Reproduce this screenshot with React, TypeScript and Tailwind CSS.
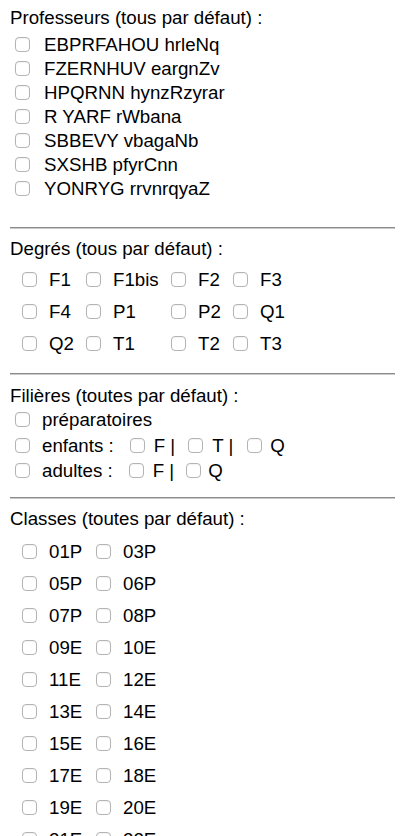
import React from 'react'

const professeurs = [
  'EBPRFAHOU hrleNq',
  'FZERNHUV eargnZv',
  'HPQRNN hynzRzyrar',
  'R YARF rWbana',
  'SBBEVY vbagaNb',
  'SXSHB pfyrCnn',
  'YONRYG rrvnrqyaZ'
]

const degres = [
  ['F1', 'F1bis', 'F2', 'F3'],
  ['F4', 'P1', 'P2', 'Q1'],
  ['Q2', 'T1', 'T2', 'T3']
]

const classes = [
  ['01P', '03P'],
  ['05P', '06P'],
  ['07P', '08P'],
  ['09E', '10E'],
  ['11E', '12E'],
  ['13E', '14E'],
  ['15E', '16E'],
  ['17E', '18E'],
  ['19E', '20E'],
  ['21E', '22E']
]

function Box() {
  return (
    <input
      type="checkbox"
      className="appearance-none block w-[15px] h-[15px] shrink-0 m-0 rounded-[4px] border border-[#b4b4b4] bg-white shadow-[inset_0_1px_1px_rgba(0,0,0,0.05)]"
    />
  )
}

function Separator() {
  return (
    <div>
      <div className="h-px bg-[#8c8c8c]" />
      <div className="h-px bg-[#c9c9c9]" />
    </div>
  )
}

export default function App() {
  return (
    <div
      className="h-[836px] bg-white text-black text-[18.7px] leading-[21px] pt-[7px] pl-[10px] pr-[5px] overflow-hidden"
      style={{ fontFamily: '"Liberation Sans", Arial, sans-serif' }}
    >
      {/* Professeurs */}
      <div className="h-[21px]">Professeurs (tous par défaut) :</div>
      <div className="mt-[4px] pl-[5px]">
        {professeurs.map((p) => (
          <label key={p} className="flex items-center h-[24px] gap-[14px]">
            <Box />
            <span>{p}</span>
          </label>
        ))}
      </div>

      <div className="mt-[27px]">
        <Separator />
      </div>

      {/* Degrés */}
      <div className="mt-[9px] h-[21px]">Degrés (tous par défaut) :</div>
      <div className="mt-[4px] pl-[12px] grid grid-cols-[64px_85px_62px_auto]">
        {degres.flat().map((d) => (
          <label key={d} className="flex items-center h-[32px] gap-[12px]">
            <Box />
            <span>{d}</span>
          </label>
        ))}
      </div>

      <div className="mt-[14px]">
        <Separator />
      </div>

      {/* Filières */}
      <div className="mt-[10px] h-[21px]">Filières (toutes par défaut) :</div>
      <div className="mt-[1px] pl-[5px]">
        <label className="flex items-center h-[25.5px] gap-[12px]">
          <Box />
          <span>préparatoires</span>
        </label>
        <div className="flex items-center h-[25.5px]">
          <Box />
          <span className="ml-[12px]">enfants :</span>
          <span className="ml-[16px]"><Box /></span>
          <span className="ml-[9px]">F |</span>
          <span className="ml-[13px]"><Box /></span>
          <span className="ml-[9px]">T |</span>
          <span className="ml-[14px]"><Box /></span>
          <span className="ml-[8px]">Q</span>
        </div>
        <div className="flex items-center h-[25.5px]">
          <Box />
          <span className="ml-[12px]">adultes :</span>
          <span className="ml-[16px]"><Box /></span>
          <span className="ml-[9px]">F |</span>
          <span className="ml-[12px]"><Box /></span>
          <span className="ml-[7px]">Q</span>
        </div>
      </div>

      <div className="mt-[13px]">
        <Separator />
      </div>

      {/* Classes */}
      <div className="mt-[9px] h-[21px]">Classes (toutes par défaut) :</div>
      <div className="mt-[7px] pl-[12px] grid grid-cols-[74px_auto]">
        {classes.flat().map((c) => (
          <label key={c} className="flex items-center h-[32px] gap-[12px]">
            <Box />
            <span>{c}</span>
          </label>
        ))}
      </div>
    </div>
  )
}
